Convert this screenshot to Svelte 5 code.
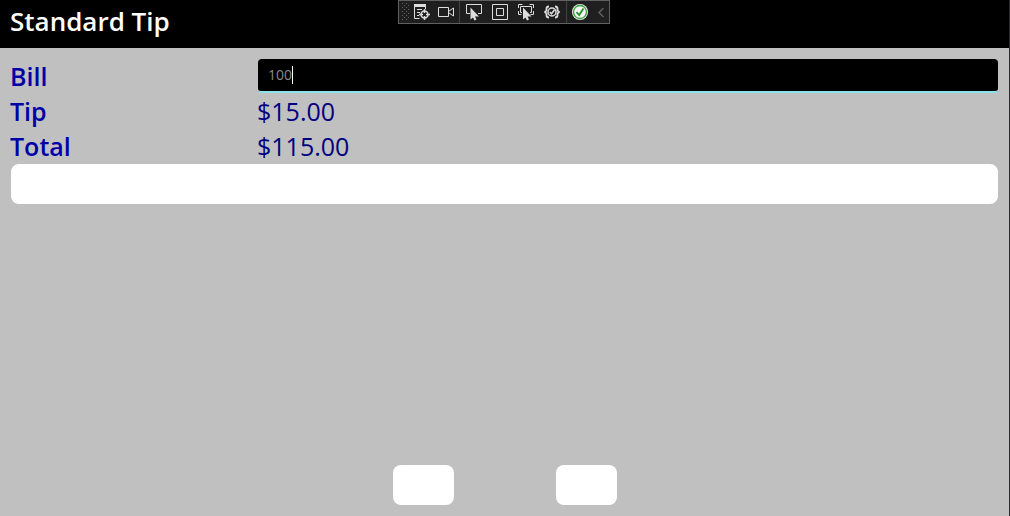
<script lang="ts">
  let bill = $state('100');
  const amount = $derived(Number(bill) || 0);
  const tip = $derived(amount * 0.15);
  const money = (n: number) => '$' + n.toFixed(2);
</script>

<div class="window">
  <header><h1>Standard Tip</h1></header>

  <div class="toolbar" role="toolbar" aria-label="Debug tools">
    <svg class="grip" width="7" height="18" viewBox="0 0 7 18" shape-rendering="crispEdges">
      {#each [0, 4, 8, 12, 16] as y}
        <path d="M0 {y}h1v1h-1zM4 {y}h1v1h-1zM2 {y + 2}h1v1h-1zM6 {y + 2}h1v1h-1z" fill="#606060" />
      {/each}
    </svg>
    <button class="live" aria-label="Live visual tree">
      <svg width="18" height="18" viewBox="0 0 18 18" fill="none" stroke="#ddd">
        <path d="M1 2.500h12" stroke-width="3" />
        <path d="M1.500 4v11.500h5M12.500 4v2M4 6.500h5M4 9.500h3M4 12.500h2" />
        <circle cx="11.500" cy="11.500" r="3.500" stroke-width="1.500" />
        <path d="M11.500 6v4M11.500 13v4M6 11.500h4M13 11.500h4" stroke-width="1.500" />
      </svg>
    </button>
    <button class="camera" aria-label="Record">
      <svg width="18" height="18" viewBox="1 0 18 18" fill="none" stroke="#ddd">
        <path d="M1.500 4.500h10v9h-10zM12 8l4.500-3v8L12 10" />
      </svg>
    </button>
    <span class="divider"></span>
    <button class="select" aria-label="Select element">
      <svg width="18" height="18" viewBox="0 0 18 18" fill="none" stroke="#ddd">
        <path d="M5 10.500H1.500v-9h15v9H13" />
        <path d="M5.500 4.500v12l2.500-2 1.500 3 2-1-1.500-3h4z" fill="#ddd" stroke="none" />
      </svg>
    </button>
    <button class="layout" aria-label="Display layout adorners">
      <svg width="18" height="18" viewBox="1 0 18 18" fill="none" stroke="#ddd">
        <path d="M1.500 1.500h15v15h-15zM5.500 5.500h7v7h-7z" />
      </svg>
    </button>
    <button class="track" aria-label="Track focused element">
      <svg width="18" height="18" viewBox="1 0 18 18" fill="none" stroke="#ddd">
        <path d="M1.500 5v-3.500h4M12.500 1.500h4v3.500M1.500 8v3.500h3M16.500 8v3.500h-3M5 9.500H3.500v-6h11v6H13" />
        <path d="M6 4.500v12l2.500-2 1.500 3 2-1-1.500-3h4z" fill="#ddd" stroke="none" />
      </svg>
    </button>
    <button class="bind" aria-label="Binding failures">
      <svg width="18" height="18" viewBox="1 0 18 18" fill="none" stroke="#ddd" stroke-width="1.800">
        <path d="M6 3.500Q3.500 3.500 3.500 5.500v2L2 9l1.500 1.500v2q0 2 2.500 2M12 3.500q2.500 0 2.500 2v2L16 9l-1.500 1.500v2q0 2-2.500 2" />
        <circle cx="9" cy="9" r="4" stroke-width="1.500" />
        <path d="M6.800 9l1.700 1.800 3-4" stroke-width="1.500" />
      </svg>
    </button>
    <span class="divider"></span>
    <button class="reload" aria-label="Hot reload">
      <svg width="18" height="18" viewBox="0 0 18 18" fill="none">
        <circle cx="9" cy="9" r="8" fill="#eee" />
        <circle cx="9" cy="9" r="6.500" fill="#f5f5f5" stroke="#35a035" stroke-width="1.300" />
        <path d="M5.500 9.200l2.700 2.800L12.500 5.500" stroke="#289028" stroke-width="1.800" />
      </svg>
    </button>
    <button class="fold" aria-label="Collapse toolbar">
      <svg width="8" height="12" viewBox="0 0 8 12" fill="none" stroke="#666" stroke-width="1.300">
        <path d="M6.500 2L2 6.500 6.500 11" />
      </svg>
    </button>
  </div>

  <main>
    <div class="row">
      <label for="bill">Bill</label>
      <div class="entry">
        <input id="bill" type="text" inputmode="decimal" bind:value={bill} />
        <span class="caret"></span>
      </div>
    </div>
    <div class="row"><span class="name">Tip</span><output for="bill">{money(tip)}</output></div>
    <div class="row"><span class="name">Total</span><output for="bill">{money(amount + tip)}</output></div>
    <button class="plain wide" aria-label="Calculate"></button>
    <footer>
      <button class="plain" aria-label="Previous"></button>
      <button class="plain" aria-label="Next"></button>
    </footer>
  </main>
</div>

<style>
  :global(body) { margin: 0; }
  .window {
    position: relative;
    box-sizing: border-box;
    min-height: 100vh;
    display: flex;
    flex-direction: column;
    background: #c0c0c0;
    border-right: 1px solid #2d2d30;
    font-family: "Open Sans", "Noto Sans", sans-serif;
  }
  header {
    box-sizing: border-box;
    padding: 3px 10px 9px;
    background: #000;
  }
  h1 {
    margin: 0;
    color: #fff;
    font-size: 26px;
    line-height: 36px;
    font-weight: 600;
  }
  .toolbar {
    position: absolute;
    top: 0;
    left: 50%;
    transform: translateX(-50%);
    margin-left: -1px;
    box-sizing: border-box;
    width: 212px;
    height: 24px;
    display: flex;
    align-items: center;
    padding: 0 3px;
    background: #1f1f1f;
    border: 1px solid #606060;
  }
  .toolbar button {
    display: flex;
    justify-content: center;
    flex: 0 0 26px;
    padding: 0;
    border: 0;
    background: none;
  }
  .toolbar svg { flex: none; }
  .toolbar .camera { flex-basis: 24px; }
  .toolbar .select { flex-basis: 28px; }
  .toolbar .fold { flex-basis: 16px; }
  .divider {
    flex: 0 0 1px;
    height: 22px;
    background: #444;
  }
  main {
    flex: 1;
    display: flex;
    flex-direction: column;
    padding: 11px 11px 11px 10px;
  }
  .row {
    display: grid;
    grid-template-columns: 1fr 3fr;
    height: 35px;
    font-size: 25px;
    line-height: 35px;
    color: #000080;
  }
  label, .name {
    color: #0000a8;
    font-weight: 600;
  }
  .entry {
    position: relative;
    height: 34px;
    margin-left: 1px;
  }
  input {
    display: block;
    box-sizing: border-box;
    width: 100%;
    height: 34px;
    padding: 0 10px 2px;
    border: 0;
    border-bottom: 2px solid #88e4e8;
    border-radius: 4px;
    outline: 0;
    background: #000;
    color: #8a8a8a;
    font: 14px "Open Sans", "Noto Sans", sans-serif;
  }
  .caret {
    position: absolute;
    left: 34px;
    top: 7px;
    width: 1px;
    height: 18px;
    background: #fff;
  }
  .plain {
    width: 61px;
    height: 40px;
    padding: 0;
    border: 0;
    border-radius: 8px;
    background: #fff;
  }
  .wide {
    width: auto;
    margin-left: 1px;
  }
  footer {
    margin-top: auto;
    padding-left: 1px;
    display: flex;
    justify-content: center;
    gap: 102px;
  }
</style>
